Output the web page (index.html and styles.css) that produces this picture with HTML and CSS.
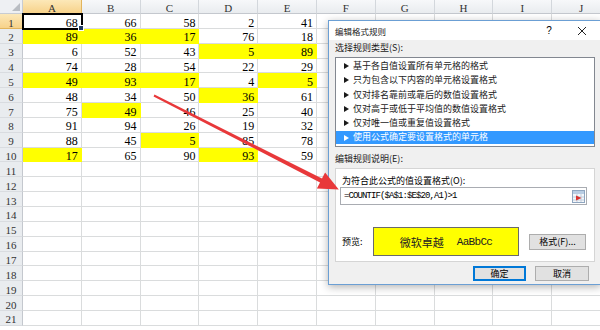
FILE: index.html
```html
<!DOCTYPE html>
<html lang="zh-CN">
<head>
  <meta charset="UTF-8">
  <title>编辑格式规则</title>
  <link rel="stylesheet" href="styles.css">
</head>
<body>
  <div class="sheet" id="sheet"></div>

  <div class="dialog">
    <div class="titlebar">
      <span class="title">编辑格式规则</span>
      <span class="tb-btn help">?</span>
      <span class="tb-btn close">
        <svg width="10" height="10" viewBox="0 0 10 10"><path d="M1 1 L9 9 M9 1 L1 9" stroke="#222" stroke-width="1" fill="none"/></svg>
      </span>
    </div>
    <div class="dlg-body">
      <div class="label">选择规则类型(S):</div>
      <ul class="rule-list">
        <li><i class="tri"></i>基于各自值设置所有单元格的格式</li>
        <li><i class="tri"></i>只为包含以下内容的单元格设置格式</li>
        <li><i class="tri"></i>仅对排名靠前或靠后的数值设置格式</li>
        <li><i class="tri"></i>仅对高于或低于平均值的数值设置格式</li>
        <li><i class="tri"></i>仅对唯一值或重复值设置格式</li>
        <li class="current"><i class="tri"></i>使用公式确定要设置格式的单元格</li>
      </ul>
      <div class="label label-2">编辑规则说明(E):</div>
      <div class="group">
        <div class="sub-label">为符合此公式的值设置格式(O):</div>
        <div class="formula">
          <span class="formula-text">=COUNTIF($A$1:$E$20,A1)&gt;1</span>
          <span class="ref-btn">
            <svg width="13" height="13" viewBox="0 0 13 13">
              <rect x="0.5" y="0.5" width="12" height="12" fill="#f4f7fb" stroke="#8fa6c0"/>
              <rect x="1" y="1" width="11" height="3" fill="#b9cde3"/>
              <path d="M1 7 H12 M1 10 H12 M5 4 V12 M9 4 V12" stroke="#c3cfdc" stroke-width="1"/>
              <path d="M4 5.5 L9.5 8 L4 10.5 Z" fill="#d8322f"/>
            </svg>
          </span>
        </div>
        <div class="preview-row">
          <span class="pv-label">预览:</span>
          <div class="preview"><span class="pv-cn">微软卓越</span><span class="pv-en">AaBbCc</span></div>
          <button class="btn fmt-btn">格式(F)...</button>
        </div>
      </div>
      <div class="actions">
        <button class="btn default">确定</button>
        <button class="btn">取消</button>
      </div>
    </div>
  </div>

  <svg class="arrow" width="600" height="330" viewBox="0 0 600 330">
    <polygon points="154.45,94.61 322,178.54 325.1,172.5 338.8,189.6 316.9,188.5 320,182.46 153.55,96.39" fill="#e8383a"/>
  </svg>

  <script>
    const data = [
      [68, 66, 58, 2, 41],
      [89, 36, 17, 76, 18],
      [6, 52, 43, 5, 89],
      [74, 28, 54, 22, 29],
      [49, 93, 17, 4, 5],
      [48, 34, 50, 36, 61],
      [75, 49, 46, 25, 40],
      [91, 94, 26, 19, 32],
      [88, 45, 5, 85, 78],
      [17, 65, 90, 93, 59]
    ];
    const cols = "ABCDEFGHIJ".split("");
    const sheet = document.getElementById("sheet");

    // COUNTIF($A$1:$E$20,A1)>1
    const count = {};
    data.flat().forEach(v => count[v] = (count[v] || 0) + 1);

    function addCell(cls, text) {
      const d = document.createElement("div");
      d.className = cls;
      d.textContent = text;
      sheet.appendChild(d);
      return d;
    }

    addCell("corner", "").appendChild(document.createElement("span"));
    cols.forEach((c, i) => addCell(i === 0 ? "col-head selected" : "col-head", c));

    for (let r = 1; r <= 21; r++) {
      addCell(r === 1 ? "row-head selected" : "row-head", r);
      for (let c = 0; c < cols.length; c++) {
        const v = data[r - 1] && c < 5 ? data[r - 1][c] : "";
        let cls = "cell";
        if (v !== "" && count[v] > 1) cls += " dup";
        if (r === 1 && c === 0) cls += " active";
        addCell(cls, v);
      }
    }
  </script>
</body>
</html>
```

FILE: styles.css
```css
body {
  margin: 0;
  width: 600px;
  height: 330px;
  overflow: hidden;
  position: relative;
  background: #fff;
  font-family: "Noto Sans CJK SC", sans-serif;
  color: #000;
}

/* feuille */
.sheet {
  display: grid;
  grid-template-columns: 23px repeat(10, 58.8px);
  grid-template-rows: 14px repeat(21, 14.85px);
  font-family: "Liberation Serif", serif;
  font-size: 12px;
}

.sheet > div {
  box-sizing: border-box;
  overflow: hidden;
  white-space: nowrap;
}

.corner {
  background: #eef0f3;
  border-right: 1px solid #c8ccd2;
  border-bottom: 1px solid #c8ccd2;
  display: flex;
  align-items: flex-end;
  justify-content: flex-end;
  padding: 0 2px 2px 0;
}

.corner span {
  width: 8px;
  height: 8px;
  background: #b9bdc3;
  clip-path: polygon(100% 0, 100% 100%, 0 100%);
}

.col-head {
  background: linear-gradient(#f7f8fa, #e9ecef);
  border-right: 1px solid #d3d7dc;
  border-bottom: 1px solid #c4c8ce;
  text-align: center;
  line-height: 14px;
  padding-top: 0.5px;
  font-size: 11px;
  color: #333;
}

.row-head {
  background: #e9ecef;
  border-right: 1px solid #c4c8ce;
  border-bottom: 1px solid #d9dce0;
  text-align: center;
  line-height: 14.85px;
  padding-top: 1.5px;
  font-size: 11px;
  color: #333;
}

.sheet .selected {
  background: linear-gradient(#fce8b8, #f7d28a);
  border-color: #e2b45c;
}

.cell {
  border-right: 1px solid #dadcdd;
  border-bottom: 1px solid #dadcdd;
  text-align: right;
  padding: 1.5px 3px 0 0;
  line-height: 14.85px;
}

.dup {
  background: #ffff00;
  border-color: #ffff00;
}

.sheet .active {
  position: relative;
  overflow: visible;
  outline: 2px solid #000;
  outline-offset: -1px;
  z-index: 1;
}

.sheet .active::after {
  content: "";
  position: absolute;
  right: -3px;
  bottom: -3px;
  width: 4px;
  height: 4px;
  background: #1f3a60;
  border: 1px solid #fff;
}

/* boîte de dialogue */
.dialog {
  position: absolute;
  left: 328px;
  top: 20px;
  width: 273px;
  height: 265px;
  box-sizing: border-box;
  border: 1px solid #6b9fd4;
  background: #f0f0f0;
  box-shadow: 0 2px 8px rgba(0, 0, 0, 0.3);
  z-index: 2;
}

.titlebar {
  height: 19px;
  background: #fff;
  display: flex;
  align-items: center;
}

.title {
  padding-left: 6px;
  font-size: 8.5px;
  color: #222;
}

.tb-btn {
  display: flex;
  align-items: center;
  justify-content: center;
  height: 19px;
  font-family: "Liberation Sans", sans-serif;
  font-size: 10px;
}

.help {
  margin-left: auto;
  width: 30px;
}

.close {
  width: 36px;
}

.dlg-body {
  padding: 0 5px 0 6px;
  font-size: 9px;
}

.label {
  line-height: 14px;
  margin-top: 1px;
  color: #1a1a1a;
}

.label-2 {
  margin-top: 5px;
}

.rule-list {
  list-style: none;
  margin: 2px 0 0;
  padding: 1px 0 0;
  height: 90px;
  box-sizing: border-box;
  border: 1px solid #828790;
  background: #fff;
}

.rule-list li {
  height: 14.3px;
  line-height: 14.3px;
  display: flex;
  align-items: center;
  padding-left: 8px;
  color: #1a1a1a;
}

.rule-list li.current {
  background: #3399ff;
  color: #fff;
  height: 13px;
  margin: 0.6px 0 0;
}

.tri {
  width: 0;
  height: 0;
  border-left: 5px solid currentColor;
  border-top: 3px solid transparent;
  border-bottom: 3px solid transparent;
  margin-right: 4px;
}

.group {
  margin-top: 2px;
  border: 1px solid #d5d5d5;
  background: #fff;
  padding: 6px 7px 5px 4px;
}

.sub-label {
  line-height: 12px;
  margin-left: 2px;
}

.formula {
  height: 18px;
  box-sizing: border-box;
  border: 1px solid #a9acb2;
  background: #fff;
  display: flex;
  align-items: center;
  padding: 0 1px 0 3px;
}

.formula-text {
  font-family: "Liberation Mono", monospace;
  font-size: 9px;
  letter-spacing: -0.9px;
  flex: 1;
}

.ref-btn {
  display: flex;
}

.preview-row {
  margin-top: 22px;
  height: 29px;
  display: flex;
  align-items: center;
}

.pv-label {
  margin-left: 2px;
  width: 31px;
}

.preview {
  width: 146px;
  height: 29px;
  box-sizing: border-box;
  border: 1px solid #6a6a6a;
  background: #ffff00;
  display: flex;
  align-items: center;
  justify-content: center;
  gap: 13px;
}

.pv-cn {
  font-size: 11px;
  color: #222;
}

.pv-en {
  font-family: "Liberation Mono", monospace;
  font-size: 11px;
  letter-spacing: -0.7px;
  color: #222;
}

.btn {
  height: 15px;
  width: 54px;
  padding: 0;
  box-sizing: border-box;
  border: 1px solid #adadad;
  background: #e1e1e1;
  font-family: "Noto Sans CJK SC", sans-serif;
  font-size: 9px;
  line-height: 13px;
  color: #000;
}

.fmt-btn {
  margin-left: auto;
  margin-right: 1px;
  width: 57px;
  height: 16px;
}

.default {
  border-color: #0078d7;
  box-shadow: inset 0 0 0 1px #0078d7;
  width: 53px;
}

.actions {
  margin-top: 4px;
  margin-right: 6px;
  display: flex;
  justify-content: flex-end;
  gap: 9px;
}

.arrow {
  position: absolute;
  left: 0;
  top: 0;
  pointer-events: none;
  z-index: 3;
}
```
